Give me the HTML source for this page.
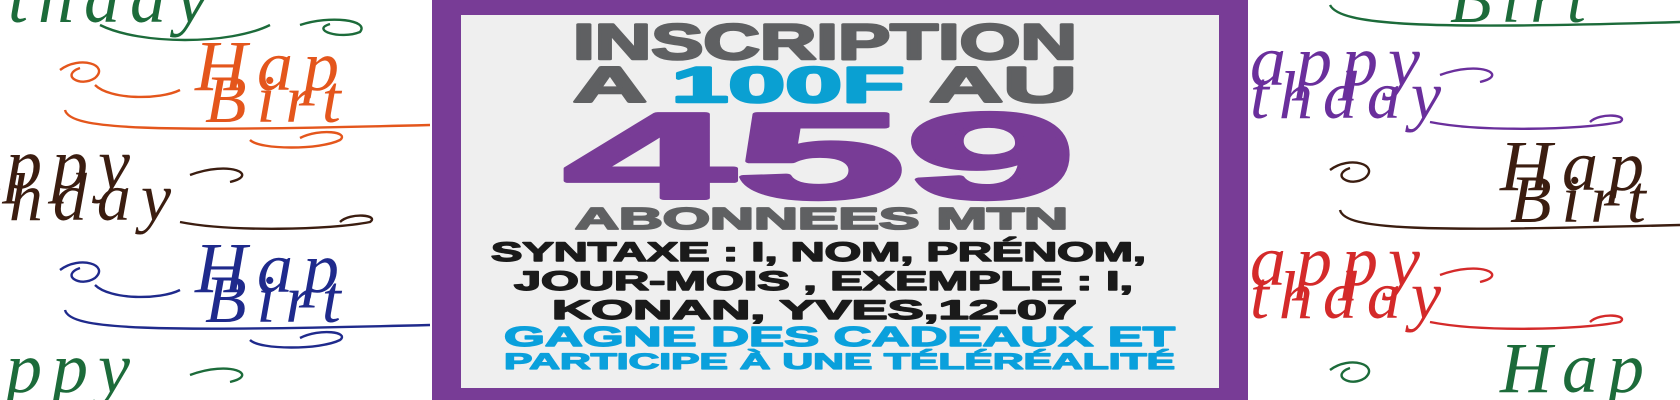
<!DOCTYPE html>
<html><head><meta charset="utf-8"><style>
html,body{margin:0;padding:0;width:1680px;height:400px;overflow:hidden;background:#fff}
svg{display:block}
</style></head><body>
<svg width="1680" height="400" viewBox="0 0 1680 400" xmlns="http://www.w3.org/2000/svg">
<g font-family="Liberation Serif, serif" font-style="italic" stroke-width="2.4" letter-spacing="10">
 <g fill="#1c6b3a"><text x="-30" y="22" font-size="72">rthday</text>
  <path fill="none" stroke="#1c6b3a" d="M100,25 C140,45 230,45 270,25 M300,25 C330,15 370,20 360,32 C340,40 310,30 330,24"/></g>
 <g fill="#e4561c"><text x="195" y="90" font-size="72">Hap</text><text x="205" y="122" font-size="68">Birt</text>
  <path fill="none" stroke="#e4561c" d="M60,70 C80,55 110,65 95,78 C80,88 60,75 80,68 M95,85 C110,100 160,100 180,90 M65,110 C70,130 150,132 430,125 M250,140 C260,150 320,150 340,140 C350,132 320,128 300,138"/></g>
 <g fill="#3b1d10"><text x="-40" y="188" font-size="72">appy</text><text x="-20" y="220" font-size="68">thday</text>
  <path fill="none" stroke="#3b1d10" d="M190,175 C230,160 260,175 230,182 M180,222 C230,232 330,230 370,222 C380,215 350,212 340,222"/></g>
 <g fill="#1f2a8c"><text x="195" y="292" font-size="72">Hap</text><text x="205" y="322" font-size="68">Birt</text>
  <path fill="none" stroke="#1f2a8c" d="M60,270 C80,255 110,265 95,278 C80,288 60,275 80,268 M95,285 C110,300 160,300 180,290 M65,310 C70,330 150,332 430,325 M250,340 C260,350 320,350 340,340 C350,332 320,328 300,338"/></g>
 <g fill="#1c6b3a"><text x="-40" y="392" font-size="72">appy</text>
  <path fill="none" stroke="#1c6b3a" d="M190,375 C230,360 260,375 230,382"/></g>
</g>
<g font-family="Liberation Serif, serif" font-style="italic" stroke-width="2.4" letter-spacing="10">
 <g fill="#1c6b3a"><text x="1450" y="22" font-size="68">Birt</text>
  <path fill="none" stroke="#1c6b3a" d="M1330,5 C1340,25 1420,30 1680,22"/></g>
 <g fill="#6a2f9c"><text x="1250" y="85" font-size="72">appy</text><text x="1250" y="118" font-size="68">thday</text>
  <path fill="none" stroke="#6a2f9c" d="M1440,75 C1480,60 1510,75 1480,82 M1430,122 C1480,132 1580,130 1620,122 C1630,115 1600,112 1590,122"/></g>
 <g fill="#3b1d10"><text x="1500" y="190" font-size="72">Hap</text><text x="1510" y="222" font-size="68">Birt</text>
  <path fill="none" stroke="#3b1d10" d="M1330,170 C1350,155 1380,165 1365,178 C1350,188 1330,175 1350,168 M1340,210 C1345,230 1420,232 1680,225"/></g>
 <g fill="#d42a2a"><text x="1250" y="285" font-size="72">appy</text><text x="1250" y="318" font-size="68">thday</text>
  <path fill="none" stroke="#d42a2a" d="M1440,275 C1480,260 1510,275 1480,282 M1430,322 C1480,332 1580,330 1620,322 C1630,315 1600,312 1590,322"/></g>
 <g fill="#1c6b3a"><text x="1500" y="392" font-size="72">Hap</text>
  <path fill="none" stroke="#1c6b3a" d="M1330,370 C1350,355 1380,365 1365,378 C1350,388 1330,375 1350,368"/></g>
</g>
<rect x="432" y="0" width="816" height="400" fill="#783c96"/>
<rect x="461" y="15" width="758" height="373" fill="#efefef"/>
<g font-family="Liberation Sans, Arial, sans-serif" font-weight="bold" stroke-linejoin="round">
 <text x="573" y="59" font-size="50" textLength="504" lengthAdjust="spacingAndGlyphs" fill="#5f6062" stroke="#5f6062" stroke-width="2.5">INSCRIPTION</text>
 <text x="573" y="102" font-size="50" textLength="504" lengthAdjust="spacingAndGlyphs" fill="#5f6062" stroke="#5f6062" stroke-width="2.5">A <tspan fill="#0aa0d2" stroke="#0aa0d2">100F</tspan> AU</text>
 <text x="564" y="198" font-size="122" textLength="512" lengthAdjust="spacingAndGlyphs" fill="#783c96" stroke="#783c96" stroke-width="4">459</text>
 <text x="575" y="229" font-size="31" textLength="493" lengthAdjust="spacingAndGlyphs" fill="#5f6062" stroke="#5f6062" stroke-width="1.8">ABONNEES MTN</text>
 <text x="491" y="261" font-size="27" textLength="655" lengthAdjust="spacingAndGlyphs" fill="#1a1a1a" stroke="#1a1a1a" stroke-width="1.4">SYNTAXE : I, NOM, PRÉNOM,</text>
 <text x="514" y="290" font-size="27" textLength="619" lengthAdjust="spacingAndGlyphs" fill="#1a1a1a" stroke="#1a1a1a" stroke-width="1.4">JOUR-MOIS , EXEMPLE : I,</text>
 <text x="552" y="319" font-size="27" textLength="525" lengthAdjust="spacingAndGlyphs" fill="#1a1a1a" stroke="#1a1a1a" stroke-width="1.4">KONAN, YVES,12-07</text>
 <text x="504" y="346" font-size="28" textLength="671" lengthAdjust="spacingAndGlyphs" fill="#0aa0dc" stroke="#0aa0dc" stroke-width="1.4">GAGNE DES CADEAUX ET</text>
 <text x="504" y="369" font-size="22" textLength="671" lengthAdjust="spacingAndGlyphs" fill="#0aa0dc" stroke="#0aa0dc" stroke-width="1.2">PARTICIPE À UNE TÉLÉRÉALITÉ</text>
</g>
</svg>
</body></html>
